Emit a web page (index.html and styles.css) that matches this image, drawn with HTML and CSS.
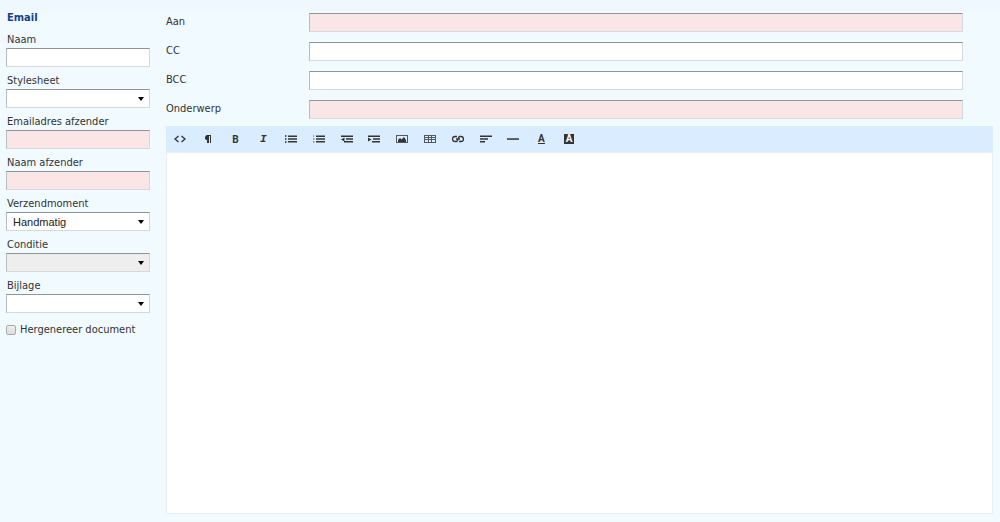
FILE: index.html
```html
<!DOCTYPE html>
<html lang="nl">
<head>
    <meta charset="UTF-8">
    <meta name="viewport" content="width=device-width, initial-scale=1.0">
    <title>Email</title>
    <link rel="stylesheet" href="styles.css">
</head>
<body>
    <form class="email-form">
        <div class="sidebar">
            <h1 class="title">Email</h1>
            <div class="field">
                <label for="naam">Naam</label>
                <input class="control" type="text" id="naam">
            </div>
            <div class="field">
                <label for="stylesheet">Stylesheet</label>
                <div class="select-wrap">
                    <select class="control" id="stylesheet"><option></option></select>
                </div>
            </div>
            <div class="field">
                <label for="afzenderEmail">Emailadres afzender</label>
                <input class="control required" type="text" id="afzenderEmail">
            </div>
            <div class="field">
                <label for="afzenderNaam">Naam afzender</label>
                <input class="control required" type="text" id="afzenderNaam">
            </div>
            <div class="field">
                <label for="verzendmoment">Verzendmoment</label>
                <div class="select-wrap">
                    <select class="control" id="verzendmoment"><option>Handmatig</option></select>
                </div>
            </div>
            <div class="field">
                <label for="conditie">Conditie</label>
                <div class="select-wrap">
                    <select class="control" id="conditie" disabled><option></option></select>
                </div>
            </div>
            <div class="field">
                <label for="bijlage">Bijlage</label>
                <div class="select-wrap">
                    <select class="control" id="bijlage"><option></option></select>
                </div>
            </div>
            <div class="check">
                <input type="checkbox" id="hergenereer">
                <label for="hergenereer">Hergenereer document</label>
            </div>
        </div>

        <div class="main">
            <div class="headers">
                <div class="row">
                    <label for="aan">Aan</label>
                    <input class="control required" type="text" id="aan">
                </div>
                <div class="row">
                    <label for="cc">CC</label>
                    <input class="control" type="text" id="cc">
                </div>
                <div class="row">
                    <label for="bcc">BCC</label>
                    <input class="control" type="text" id="bcc">
                </div>
                <div class="row">
                    <label for="onderwerp">Onderwerp</label>
                    <input class="control required" type="text" id="onderwerp">
                </div>
            </div>

            <div class="editor">
                <div class="toolbar">
                    <div class="tools">
                        <button type="button" aria-label="HTML"><svg viewBox="0 0 12 12"><path class="line" d="M4.500 3L1 6l3.500 3M7.500 3L11 6 7.500 9"/></svg></button>
                        <button type="button" aria-label="Opmaak"><svg viewBox="0 0 12 12"><path d="M9 2v8H8V3H7v7H5V7C3 7 3 5.500 3 4.500S4 2 5 2z"/></svg></button>
                        <button type="button" class="glyph" aria-label="Vet">B</button>
                        <button type="button" class="glyph italic" aria-label="Cursief">I</button>
                        <button type="button" aria-label="Opsomming"><svg viewBox="0 0 12 12"><path class="soft" d="M0 2h1.500v2H0zM0 5h1.500v2H0zM0 8h1.500v2H0z"/><path d="M3 2.500h9V4H3zM3 5.300h9v1.500H3zM3 8h9v1.500H3z"/></svg></button>
                        <button type="button" aria-label="Nummering"><svg viewBox="0 0 12 12"><path class="faint" d="M0 2h1v2H0zM0 5h1.500v2H0zM0 8h1.500v2H0z"/><path d="M3 2.500h9V4H3zM3 5.300h9v1.500H3zM3 8h9v1.500H3z"/></svg></button>
                        <button type="button" aria-label="Inspringen verkleinen"><svg viewBox="0 0 12 12"><path d="M0 2.500h12V4H0zM5 5.300h7v1.500H5zM3 8h9v1.500H3zM0 6.500L3.500 4.500v4z"/></svg></button>
                        <button type="button" aria-label="Inspringen vergroten"><svg viewBox="0 0 12 12"><path d="M0 2.500h12V4H0zM5 5.300h7v1.500H5zM4 8h8v1.500H4zM0 4.500l3.500 2-3.500 2z"/></svg></button>
                        <button type="button" aria-label="Afbeelding"><svg viewBox="0 0 12 12"><path class="soft" fill-rule="evenodd" d="M0 2h12v8H0zM1 3v6h10V3z"/><path d="M2 9V7l2-2 1.500 1.500L8 4l2 3v2z"/></svg></button>
                        <button type="button" aria-label="Tabel"><svg viewBox="0 0 12 12"><path class="soft" fill-rule="evenodd" d="M0 2h12v8H0zM1 3v1h3V3zM5 3v1h2V3zM8 3v1h3V3zM1 5v1h3V5zM5 5v1h2V5zM8 5v1h3V5zM1 7v2h3V7zM5 7v2h2V7zM8 7v2h3V7z"/></svg></button>
                        <button type="button" aria-label="Link"><svg viewBox="0 0 12 12"><path class="line" d="M5 3.500H3a2.500 2.500 0 0 0 0 5h1.500L6 7M7 8.500h2a2.500 2.500 0 0 0 0-5H7.500L6 5M4 6h4"/></svg></button>
                        <button type="button" aria-label="Uitlijnen"><svg viewBox="0 0 12 12"><path d="M0 2.500h12V4H0zM0 5.300h8v1.500H0zM0 8h5v1.500H0z"/></svg></button>
                        <button type="button" aria-label="Lijn"><svg viewBox="0 0 12 12"><path d="M0 5.300h12v1.500H0z"/></svg></button>
                        <button type="button" class="glyph" aria-label="Tekstkleur"><span class="underlined">A</span></button>
                        <button type="button" class="glyph" aria-label="Achtergrondkleur"><span class="inverse">A</span></button>
                    </div>
                </div>
                <div class="content" contenteditable="true" role="textbox" aria-label="Bericht"></div>
            </div>
        </div>
    </form>
</body>
</html>
```
FILE: styles.css
```css
* {
    margin: 0;
    padding: 0;
    box-sizing: border-box;
}

body {
    min-height: 100vh;
    background: linear-gradient(#f0f8ff 12px, #f0faff 12px);
    color: #333;
    font-family: "DejaVu Sans Condensed", "DejaVu Sans", sans-serif;
    font-size: 11px;
    line-height: 16px;
}

.email-form {
    display: flex;
    gap: 16px;
    min-height: 100vh;
    padding: 10px 7px 8px 6px;
}

/* left column */
.sidebar {
    flex: 0 0 144px;
}

.title {
    margin-bottom: 6px;
    padding-left: 1px;
    color: #15428b;
    font-size: 11px;
    font-weight: bold;
}

.field {
    margin-bottom: 6px;
}

.field label {
    display: block;
    padding-left: 1px;
}

.control {
    display: block;
    width: 100%;
    height: 19px;
    border: 1px solid #d5d9dc;
    border-top-color: #8f9496;
    border-left-color: #b8bcc0;
    border-radius: 0;
    background: #fff;
    color: #222;
    font-family: "Liberation Sans", sans-serif;
    font-size: 11px;
}

.required {
    background: #fae6e6;
}

.select-wrap {
    position: relative;
}

.select-wrap::after {
    content: "";
    position: absolute;
    top: 8px;
    right: 6px;
    border: 3px solid transparent;
    border-top: 4px solid #000;
    border-bottom: 0;
    pointer-events: none;
}

select.control {
    appearance: none;
    padding: 0 16px 0 6px;
}

select.control:disabled {
    background: #eee;
    opacity: 1;
}

.check {
    display: flex;
    align-items: center;
    gap: 4px;
    padding-top: 3px;
}

.check input {
    appearance: none;
    width: 10px;
    height: 10px;
    border: 1px solid #aaa;
    border-radius: 2px;
    background: linear-gradient(#eee, #ddd);
}

.check input:checked {
    background: #15428b;
}

/* right column */
.main {
    display: flex;
    flex: 1;
    flex-direction: column;
    gap: 7px;
    min-width: 0;
    padding-top: 3px;
}

.headers {
    display: grid;
    gap: 10px;
    padding-right: 30px;
}

.row {
    display: grid;
    grid-template-columns: 143px 1fr;
    height: 19px;
}

.row label {
    padding-top: 1px;
}

.editor {
    display: flex;
    flex: 1;
    flex-direction: column;
}

.toolbar {
    background: #daecff;
}

.tools {
    display: flex;
    max-width: 417px;
}

.tools button {
    display: flex;
    flex: 1;
    align-items: center;
    justify-content: center;
    height: 26px;
    border: 0;
    background: none;
    color: #333;
    cursor: pointer;
}

.tools button:hover {
    background: #c2dcf7;
}

.tools svg {
    width: 12px;
    height: 12px;
    fill: currentColor;
}

.tools .line {
    fill: none;
    stroke: currentColor;
    stroke-width: 1.3;
}

.tools .soft {
    opacity: 0.8;
}

.tools .faint {
    opacity: 0.4;
}

.tools .glyph {
    font-family: Roboto, sans-serif;
    font-size: 10px;
    font-weight: bold;
}

.tools .italic {
    font-family: "Liberation Mono", monospace;
    font-size: 11px;
    font-style: italic;
}

.underlined {
    border-bottom: 1px solid #333;
    line-height: 9px;
}

.inverse {
    width: 10px;
    background: #333;
    color: #fff;
    line-height: 10px;
}

.content {
    flex: 1;
    border: 1px solid #e8eef2;
    background: #fff;
    outline: none;
}
```
